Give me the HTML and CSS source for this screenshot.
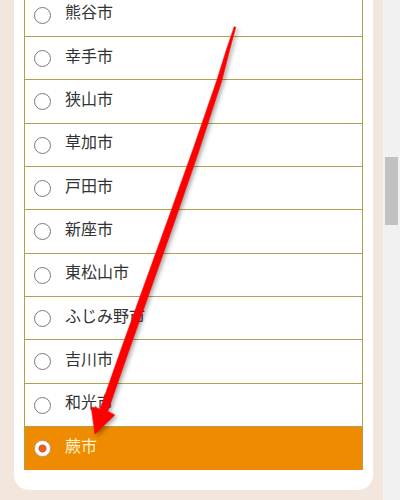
FILE: index.html
```html
<!DOCTYPE html>
<html lang="ja">
<head>
<meta charset="utf-8">
<link rel="stylesheet" href="styles.css">
</head>
<body>
<div class="page">
  <main class="content">
    <div class="card">
      <ul class="list">
        <li class="item"><span class="radio"></span><span class="label">熊谷市</span></li>
        <li class="item"><span class="radio"></span><span class="label">幸手市</span></li>
        <li class="item"><span class="radio"></span><span class="label">狭山市</span></li>
        <li class="item"><span class="radio"></span><span class="label">草加市</span></li>
        <li class="item"><span class="radio"></span><span class="label">戸田市</span></li>
        <li class="item"><span class="radio"></span><span class="label">新座市</span></li>
        <li class="item"><span class="radio"></span><span class="label">東松山市</span></li>
        <li class="item"><span class="radio"></span><span class="label">ふじみ野市</span></li>
        <li class="item"><span class="radio"></span><span class="label">吉川市</span></li>
        <li class="item"><span class="radio"></span><span class="label">和光市</span></li>
        <li class="item selected"><span class="radio"></span><span class="label">蕨市</span></li>
      </ul>
    </div>
  </main>
  <div class="scrollbar"><div class="thumb"></div></div>
</div>
<svg class="arrow" width="400" height="500" viewBox="0 0 400 500">
  <polygon points="235.76,27.26 229.51,50.53 221.77,80.79 198.83,150.99 178.21,211.12 153.49,281.22 128.68,351.29 107.78,411.32 114.8,415.1 95,434 91.2,406.9 100.22,408.68 121.32,348.71 146.51,278.78 171.79,208.88 193.17,149.01 217.23,79.21 226.49,49.47 234.24,26.74" fill="#ff0000" stroke="#ff0000" stroke-width="0.6" stroke-linejoin="round"/>
</svg>
</body>
</html>
```

FILE: styles.css
```css
html, body {
  margin: 0;
  padding: 0;
  height: 500px;
  overflow: hidden;
}
body {
  background: #f3e6dd;
  font-family: "Noto Sans CJK JP", "Noto Sans", sans-serif;
  position: relative;
}
.page {
  display: flex;
  height: 500px;
}
.content {
  flex: 1;
  padding: 0 10px 0 14px;
}
.card {
  background: #ffffff;
  border-radius: 15px;
  padding: 20px 10px 19.67px 10px;
  margin-top: -27.33px;
}
.list {
  list-style: none;
  margin: 0;
  padding: 0;
  border: 1px solid #b59f4c;
  border-bottom: none;
}
.item {
  box-sizing: content-box;
  height: 41.33px;
  padding-top: 1px;
  padding-left: 9px;
  border-bottom: 1px solid #b59f4c;
  display: flex;
  align-items: center;
  background: #ffffff;
}
.radio {
  width: 17px;
  height: 17px;
  box-sizing: border-box;
  border: 1.5px solid #7a7a7a;
  border-radius: 50%;
  background: #ffffff;
  flex: none;
}
.label {
  margin-left: 14px;
  margin-bottom: 8px;
  font-size: 16px;
  color: #333333;
  line-height: 1;
}
.item.selected {
  background: #ef8b00;
  border-bottom-color: #ef8b00;
}
.item.selected .radio {
  border: 1.5px solid #b9a695;
  background: radial-gradient(circle, #e0612a 0 3.8px, #ffffff 4.3px);
}
.item.selected .label {
  color: #fff2c8;
}
.scrollbar {
  width: 17px;
  background: #f1f1f1;
  flex: none;
  padding: 157px 2px 0 2px;
  box-sizing: border-box;
}
.thumb {
  height: 68px;
  background: #c1c1c1;
}
.arrow {
  position: absolute;
  left: 0;
  top: 0;
  pointer-events: none;
  filter: drop-shadow(2px 2px 2px rgba(0, 0, 0, 0.35));
}
```
